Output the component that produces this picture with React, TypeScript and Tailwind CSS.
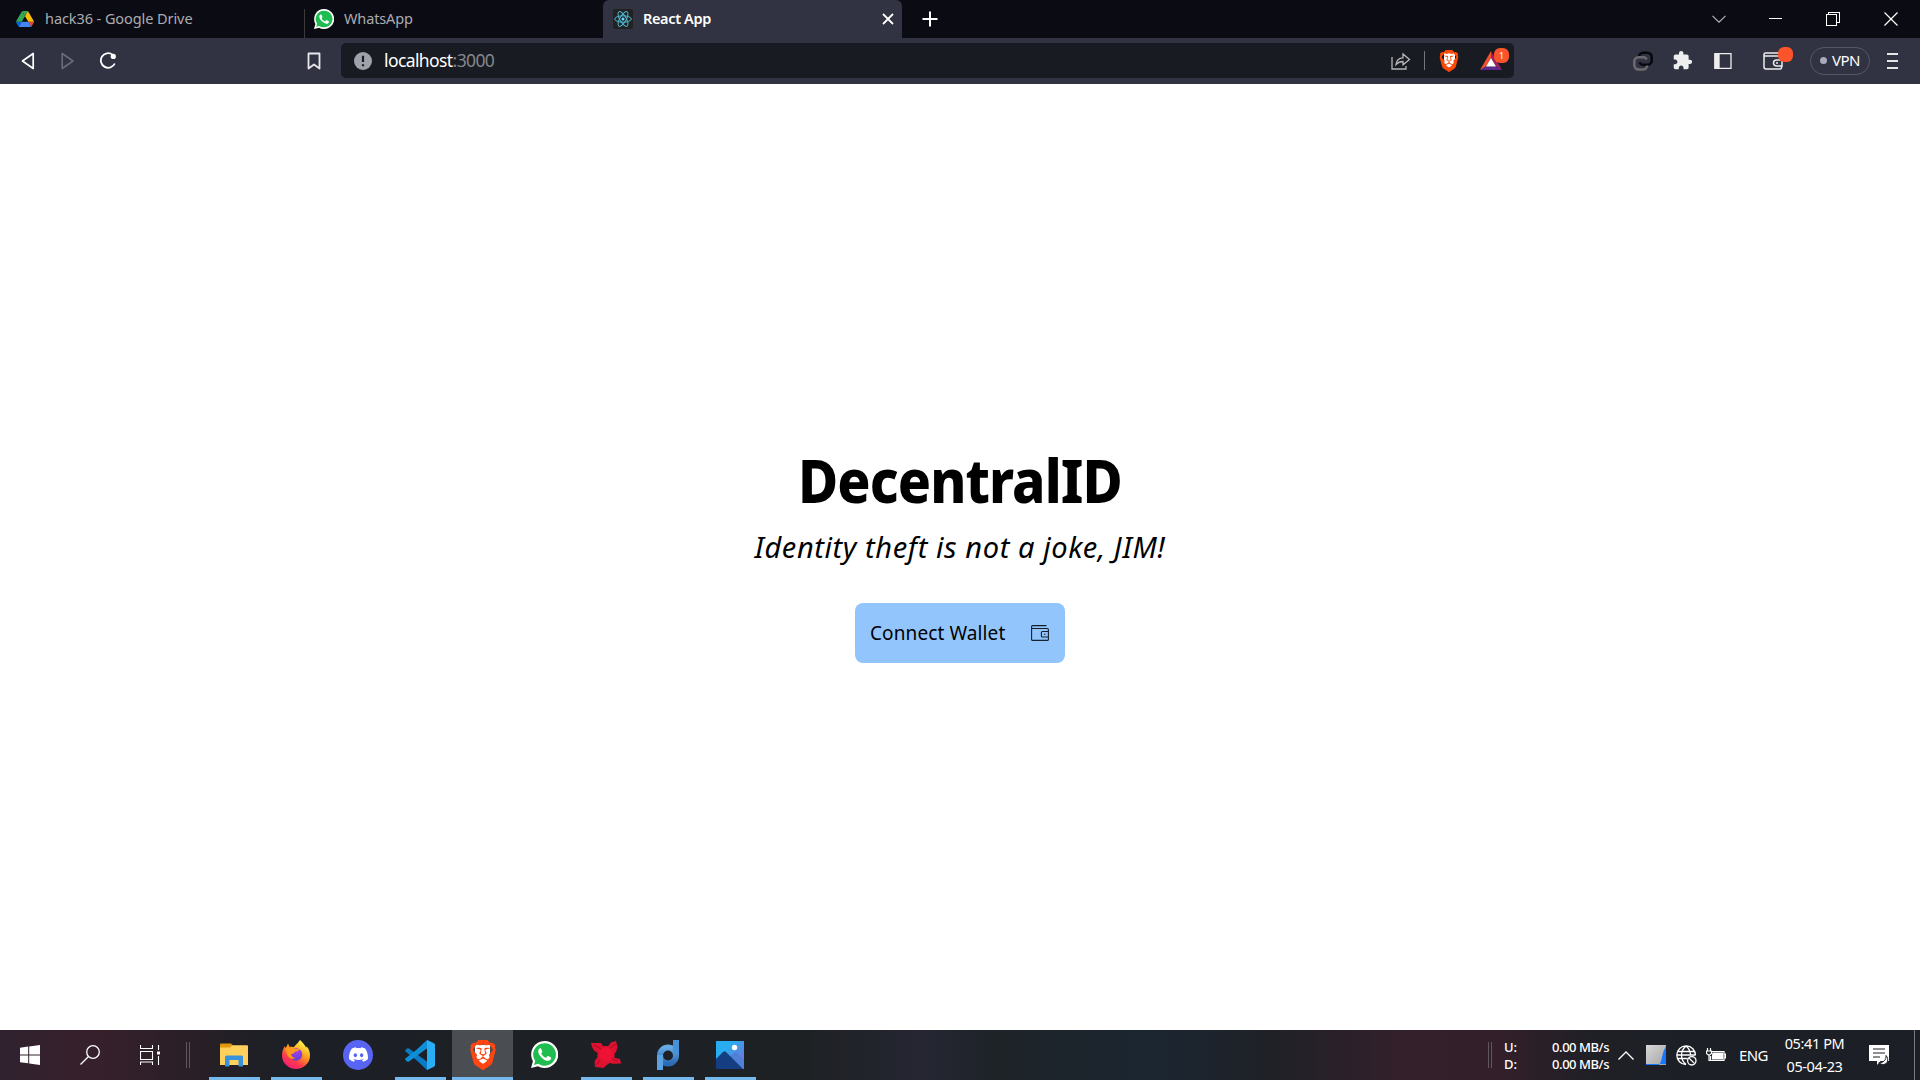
import React from "react";
import { SiBrave, SiDiscord } from "react-icons/si";
import { MdExtension } from "react-icons/md";

function DriveIcon() {
  return (
    <svg viewBox="0 0 87.3 78" className="h-4 w-[18px]">
      <path d="m6.6 66.85 3.85 6.65c.8 1.4 1.95 2.5 3.3 3.3l13.75-23.8h-27.5c0 1.55.4 3.1 1.2 4.5z" fill="#0066da" />
      <path d="m43.65 25-13.75-23.8c-1.35.8-2.5 1.9-3.3 3.3l-25.4 44a9.06 9.06 0 0 0 -1.2 4.5h27.5z" fill="#34a853" />
      <path d="m73.55 76.8c1.35-.8 2.5-1.9 3.3-3.3l1.6-2.75 7.65-13.25c.8-1.4 1.2-2.95 1.2-4.5h-27.5l5.85 11.5z" fill="#ea4335" />
      <path d="m43.65 25 13.75-23.8c-1.35-.8-2.9-1.2-4.5-1.2h-18.5c-1.6 0-3.15.45-4.5 1.2z" fill="#34a853" />
      <path d="m59.8 53h-32.3l-13.75 23.8c1.35.8 2.9 1.2 4.5 1.2h50.8c1.6 0 3.15-.45 4.5-1.2z" fill="#4285f4" />
      <path d="m73.4 26.5-12.7-22c-.8-1.4-1.95-2.5-3.3-3.3l-13.75 23.8 16.15 28h27.45c0-1.55-.4-3.1-1.2-4.5z" fill="#fbbc04" />
    </svg>
  );
}

function WhatsAppIcon({ className }: { className: string }) {
  return (
    <svg viewBox="0 0 28 28" className={className}>
      <path d="M14 0A14 14 0 0 0 2 21L0 28l7.2-1.9A14 14 0 1 0 14 0Z" fill="#fff" />
      <path d="M14 2.3A11.7 11.7 0 0 0 4.4 20.700L3 25l4.600-1.300A11.700 11.700 0 1 0 14 2.300Z" fill="#1fbd4f" />
      <path d="M9.700 7.600c-.8 0-2.200 1.100-2.200 3.200 0 2.300 1.700 4.500 3.700 6.500 2.300 2.200 4.700 3.300 6.400 3.300 1.900 0 3.300-1.200 3.300-2.900 0-.5-.2-.7-.6-.9l-2.500-1.200c-.4-.2-.7-.1-.9.2l-1 1.300c-.3.3-.6.3-1 .1-1.800-.8-3.200-2.100-4.100-3.700-.2-.4-.1-.6.1-.9l.7-.9c.2-.3.2-.5.1-.8l-1.100-2.700c-.2-.5-.5-.6-.9-.6Z" fill="#fff" />
    </svg>
  );
}

function ReactIcon() {
  return (
    <svg viewBox="0 0 20 20" className="size-5" fill="none" stroke="#4fb8d3" strokeWidth="1">
      <rect width="20" height="20" rx="2" fill="#222" stroke="none" />
      <ellipse cx="10" cy="10" rx="8.300" ry="3.200" />
      <ellipse cx="10" cy="10" rx="8.300" ry="3.200" transform="rotate(60 10 10)" />
      <ellipse cx="10" cy="10" rx="8.300" ry="3.200" transform="rotate(120 10 10)" />
      <circle cx="10" cy="10" r="1.500" fill="#61dafb" stroke="none" />
    </svg>
  );
}

function BraveIcon({ size }: { size: "sm" | "lg" }) {
  return (
    <span className={size === "sm" ? "relative block size-[22px]" : "relative block size-[30px]"}>
      <span className="absolute inset-x-[25%] inset-y-[18%] rounded-b-full bg-white" />
      <SiBrave className={size === "sm" ? "relative size-full text-[#fb4a06]" : "relative size-full text-[#ff4612]"} />
    </span>
  );
}

function TabBar() {
  return (
    <div className="flex h-[38px] bg-[#0b0b14] text-[14.500px] text-[#abacb0]">
      <div className="flex w-[304px] items-center pl-4">
        <DriveIcon />
        <span className="ml-[11px] whitespace-nowrap tracking-[-0.080px]">hack36 - Google Drive</span>
      </div>
      <div className="mt-[9px] w-px bg-[#3b3b3b]" />
      <div className="flex w-[298px] items-center pl-[9px]">
        <WhatsAppIcon className="size-5" />
        <span className="ml-[10px] tracking-[-0.150px]">WhatsApp</span>
      </div>
      <div className="flex w-[299px] items-center rounded-t-[6px] bg-[#313342] pl-[10px] text-white">
        <ReactIcon />
        <span className="ml-[10px] font-semibold tracking-[-0.350px]">React App</span>
        <svg viewBox="0 0 12 12" className="mr-[8px] ml-auto size-3" stroke="#fff" strokeWidth="1.800">
          <path d="M1 1l10 10M11 1L1 11" />
        </svg>
      </div>
      <div className="flex items-center pl-5">
        <svg viewBox="0 0 16 16" className="size-4" stroke="#fff" strokeWidth="2">
          <path d="M8 .5v15M.5 8h15" />
        </svg>
      </div>
      <div className="mr-[22px] ml-auto flex items-center pb-px">
        <svg viewBox="0 0 14 8" className="h-2 w-[14px]" fill="none" stroke="#b8b8bc" strokeWidth="1.100">
          <path d="M.5 .8L7 7.200L13.500 .8" />
        </svg>
        <span className="ml-[43px] h-px w-[13px] bg-white" />
        <svg viewBox="0 0 14 14" className="ml-11 size-[14px]" fill="none" stroke="#fff" shapeRendering="crispEdges">
          <path d="M.5 2.500h10v11H.5zM2.500 2.500v-2h11v10h-3" />
        </svg>
        <svg viewBox="0 0 14 14" className="ml-11 size-[14px]" stroke="#fff" strokeWidth="1.200">
          <path d="M.5 .5l13 13M13.500 .5l-13 13" />
        </svg>
      </div>
    </div>
  );
}

function AddressBar() {
  return (
    <div className="ml-[20px] flex h-[35px] w-[1173px] items-center rounded-[5px] bg-[#181b22]">
      <svg viewBox="0 0 18 18" className="ml-[13px] size-[18px]">
        <circle cx="9" cy="9" r="9" fill="#a0a2ab" />
        <path d="M9 3.800v6.200M9 12.200v2" stroke="#181b22" strokeWidth="2.200" />
      </svg>
      <span className="ml-3 text-[17.500px] tracking-[-0.600px] text-white">
        localhost<span className="text-[#85878c]">:3000</span>
      </span>
      <svg viewBox="0 0 20 18" className="ml-auto h-[18px] w-5" fill="none" stroke="#b4b5b8" strokeWidth="1.300">
        <path d="M1 5v12h14v-3" />
        <path d="M5 12.500c.4-4.300 3-6.500 7-6.700V2l6.500 5.500L12 12.800V9.500c-3 0-5 .8-7 3Z" />
      </svg>
      <span className="ml-[13px] h-[19px] w-px bg-[#74767b]" />
      <span className="ml-[13px]"><BraveIcon size="sm" /></span>
      <span className="relative mr-[12px] ml-[20px]">
        <svg viewBox="0 0 22 19" className="h-[19px] w-[22px]">
          <path d="M11 0L0 19l6-3.500L11 7Z" fill="#f2502f" />
          <path d="M11 0l11 19-6-3.500L11 7Z" fill="#9e1f63" />
          <path d="M0 19h22l-6-3.500H6Z" fill="#5b2a8c" />
          <path d="M11 7l5 8.500H6Z" fill="#fff" />
        </svg>
        <span className="absolute -top-[3px] left-[14px] flex size-[15px] items-center justify-center rounded-[6px] bg-[#fb542b] text-[9px] text-white">1</span>
      </span>
    </div>
  );
}

function Toolbar() {
  return (
    <div className="flex h-[46px] items-center bg-[#313342] pb-px">
      <svg viewBox="0 0 14 18" className="ml-[21px] h-[18px] w-[14px]" fill="none" stroke="#fff" strokeWidth="1.700" strokeLinejoin="round">
        <path d="M12.200 1.500v15L1.500 9Z" />
      </svg>
      <svg viewBox="0 0 14 18" className="ml-[26px] h-[18px] w-[14px]" fill="none" stroke="#696b79" strokeWidth="1.600" strokeLinejoin="round">
        <path d="M1.200 1.500v15L12 9Z" />
      </svg>
      <svg viewBox="0 0 18 18" className="ml-[24px] size-[18px]" fill="none" stroke="#fff" strokeWidth="1.800">
        <path d="M13.500 2.600A7.300 7.300 0 1 0 15.800 11.500" />
        <circle cx="14.300" cy="4.400" r="2.600" fill="#fff" stroke="none" />
      </svg>
      <svg viewBox="0 0 14 18" className="ml-[190px] h-[18px] w-[14px]" fill="none" stroke="#e8e8ea" strokeWidth="1.800" strokeLinejoin="round">
        <path d="M1.500 1.500h11v15L7 12.500l-5.500 4Z" />
      </svg>
      <AddressBar />
      <svg viewBox="0 0 20 20" className="ml-[119px] size-5" fill="none" strokeWidth="2.500">
        <path d="M6 6.500V6a4.300 4.300 0 0 1 4.300-4.300h4A4.300 4.300 0 0 1 18.700 6v3.500a4.300 4.300 0 0 1-4.400 4.300H10A4 4 0 0 1 6.500 11.500" stroke="#07080c" />
        <path d="M13.500 8.500A3.500 3.500 0 0 0 10 6.300H5.500A4.300 4.300 0 0 0 1.300 10.300v4a4.300 4.300 0 0 0 4.200 4.200H10a4.300 4.300 0 0 0 4.200-4" stroke="#6b6b70" />
      </svg>
      <MdExtension className="ml-[19px] size-[21px] text-[#eee]" />
      <svg viewBox="0 0 18 16" className="ml-[21px] h-4 w-[18px]" fill="none" stroke="#eee" strokeWidth="1.300">
        <path d="M1 .7h16v14.600H1z" />
        <path d="M1 1h4v14H1z" fill="#eee" />
      </svg>
      <span className="relative ml-[31px]">
        <svg viewBox="0 0 20 18" className="h-[18px] w-5" fill="none" stroke="#eee" strokeWidth="1.500">
          <path d="M18.500 7V5.500a1.500 1.500 0 0 0-1.500-1.500H1V2.500A1.500 1.500 0 0 1 2.500 1H17M1 3v12a2 2 0 0 0 2 2h14a1.500 1.500 0 0 0 1.500-1.500V14" />
          <path d="M19 8v6h-5.500a3 3 0 0 1 0-6Z" />
          <path d="M13 11h2" />
        </svg>
        <span className="absolute -top-[5px] left-[15px] size-[15px] rounded-[6px] bg-[#fb542b]" />
      </span>
      <div className="ml-[27px] flex h-7 w-[60px] items-center justify-center gap-[5px] rounded-full border border-[#54566a] text-[15px] tracking-[-0.500px] text-white">
        <span className="size-[7px] rounded-full bg-[#a9abbd]" />
        VPN
      </div>
      <div className="ml-[17px] flex flex-col gap-[5px]">
        <span className="h-[2px] w-[11px] bg-[#e6e6e8]" />
        <span className="h-[2px] w-[11px] bg-[#e6e6e8]" />
        <span className="h-[2px] w-[11px] bg-[#e6e6e8]" />
      </div>
    </div>
  );
}

function Landing() {
  return (
    <main className="flex h-[946px] flex-col items-center bg-white text-black">
      <h1 className="mt-[361px] scale-x-[0.915] text-[60px] leading-[70px] font-extrabold tracking-[-1px]">DecentralID</h1>
      <p className="mt-[14px] text-[29px] leading-9 tracking-[0.600px] italic">Identity theft is not a joke, JIM!</p>
      <button className="mt-[38px] flex h-[60px] w-[210px] items-center rounded-lg bg-[#93c5fd] pl-[15px] text-[19px]">
        <span className="tracking-[0.100px] whitespace-nowrap">Connect Wallet</span>
        <svg viewBox="0 0 18 16" className="mr-4 ml-auto h-4 w-[18px]" fill="none" stroke="#16202c" strokeWidth="1.100">
          <path d="M17.400 6V4.500a1 1 0 0 0-1-1H.6V1.600a1 1 0 0 1 1-1H15.500M.6 3v11.400a1 1 0 0 0 1 1h14.800a1 1 0 0 0 1-1V11.500" />
          <path d="M17.400 6.500v5.500h-6a1 1 0 0 1-1-1V7.500a1 1 0 0 1 1-1Z" />
          <path d="M13 9.300h1.500" />
        </svg>
      </button>
    </main>
  );
}

function FolderIcon() {
  return (
    <svg viewBox="0 0 28 24" className="h-6 w-7">
      <path d="M0 1.500Q0 .5 1 .5h10l2 2v4H0Z" fill="#e09a0a" />
      <path d="M0 4.500h10l2.500-2.200H27q1 0 1 1V22H0Z" fill="#ffd15c" />
      <path d="M5 23.500V14q0-1.500 1.500-1.500h15q1.500 0 1.500 1.500v9.500h-4.500V17h-9v6.500Z" fill="#3992dc" />
    </svg>
  );
}

function FirefoxIcon() {
  return (
    <svg viewBox="0 0 28 29" className="h-[29px] w-7">
      <defs>
        <linearGradient id="fx" x1="0.800" y1="0" x2="0.200" y2="1">
          <stop offset="0.100" stopColor="#fff044" />
          <stop offset="0.420" stopColor="#ff9a1e" />
          <stop offset="0.700" stopColor="#ff3b4c" />
          <stop offset="1" stopColor="#ec1582" />
        </linearGradient>
        <radialGradient id="fxglobe" cx="0.600" cy="0.300" r="0.800">
          <stop offset="0" stopColor="#a03ff0" />
          <stop offset="1" stopColor="#5a3fc4" />
        </radialGradient>
      </defs>
      <path d="M18 0c3 3 5 5 6 7.500.5-.2.700-.6.800-1C27 9 28 12 28 15.500A14 13.500 0 0 1 0 15.500C0 11 1.500 8 3 6l.5 3L6 3.500 7.500 7c2-.5 3.500-.3 4.500.3C13 5 15.500 4 18 0Z" fill="url(#fx)" />
      <circle cx="14" cy="14.500" r="6.200" fill="url(#fxglobe)" />
      <path d="M3 8c2-1.500 7-1.500 9.500.7l5 .6c-.3 1.700-2.500 2.200-4.500 2.400-.8 1.800-2 2.300-4 2.300.5 2.700 2.500 4 5 4-3.500 1.700-8 .5-9-4C4.500 12 3.500 10 3 8Z" fill="#ff981f" />
    </svg>
  );
}

function VsCodeIcon() {
  return (
    <svg viewBox="0 0 30 30" className="size-[30px]">
      <path d="M0 10.500l2-2q1-.6 2 0L28 26l-6 4Q12 20 1 12Q0 11.200 0 10.500Z" fill="#0a7bc4" />
      <path d="M0 19.500l2 2q1 .6 2 0L28 4l-6-4Q12 10 1 18Q0 18.800 0 19.500Z" fill="#0f8fd8" />
      <path d="M22 0l7 3.200q1 .5 1 1.800v20q0 1.300-1 1.800L22 30Z" fill="#29aef5" />
    </svg>
  );
}

function RedStarIcon() {
  return (
    <svg viewBox="0 0 30 27" className="h-[27px] w-[30px]">
      <path d="M0 2h10l2.500 3.500c1.500-.6 3-.6 4.500-.2L20 1.500 25 0l1.500 6-1 4-2 3c.3 1.300.2 2.600-.1 3.800L29 18l1 4.500-9 .3-2-1-3.500 2.400L12.500 27 4 26l-.5-5.500 3-4.500c-.3-1.600-.2-2.600.2-4L3 9.500 1 6Z" fill="#dc1230" />
      <circle cx="15" cy="13.500" r="7" fill="#ee1235" />
      <path d="M3 4l7 4M25 3l-6 4M5 24l4-5M27 20l-6-2" stroke="#a90c22" strokeWidth="1" />
    </svg>
  );
}

function PdIcon() {
  return (
    <svg viewBox="0 0 22 30" className="h-[30px] w-[22px]" fill="none" strokeWidth="6">
      <defs>
        <linearGradient id="pd" x1="0" y1="0" x2="0" y2="1">
          <stop offset="0" stopColor="#65a9e6" />
          <stop offset="1" stopColor="#2b6cb5" />
        </linearGradient>
      </defs>
      <circle cx="11" cy="15.500" r="8" stroke="url(#pd)" />
      <path d="M3 30V15" stroke="#5aa2e3" />
      <path d="M19 0v15" stroke="#4a90d6" />
    </svg>
  );
}

function PhotosIcon() {
  return (
    <svg viewBox="0 0 28 28" className="size-7">
      <defs>
        <linearGradient id="sky" x1="0" y1="0" x2="1" y2="1">
          <stop offset="0.300" stopColor="#28aef0" />
          <stop offset="1" stopColor="#8a62d0" />
        </linearGradient>
      </defs>
      <path d="M0 0h28v28H0z" fill="url(#sky)" />
      <path d="M12 18l6-6q1.500-1.500 3 0l7 7v9H14Z" fill="#4f7fd6" />
      <path d="M0 18l7-7q1.500-1.500 3 0l17 17H0Z" fill="#143d82" />
      <circle cx="18.500" cy="6.500" r="2.700" fill="#fff" />
    </svg>
  );
}

type AppSlot = { name: string; icon: React.ReactNode; open?: boolean; active?: boolean };

const apps: AppSlot[] = [
  { name: "Files", icon: <FolderIcon />, open: true },
  { name: "Firefox", icon: <FirefoxIcon />, open: true },
  {
    name: "Discord",
    icon: (
      <span className="flex size-[30px] items-center justify-center rounded-full bg-[#5865f2]">
        <SiDiscord className="size-[19px] text-white" />
      </span>
    ),
  },
  { name: "Code", icon: <VsCodeIcon />, open: true },
  { name: "Brave", icon: <BraveIcon size="lg" />, active: true },
  { name: "WhatsApp", icon: <WhatsAppIcon className="size-[27px]" /> },
  { name: "Star", icon: <RedStarIcon />, open: true },
  { name: "Pd", icon: <PdIcon />, open: true },
  { name: "Photos", icon: <PhotosIcon />, open: true },
];

function Grip() {
  return <span className="h-[26px] w-1 border-x border-[#5f5660]" />;
}

function Taskbar() {
  return (
    <div className="flex h-[50px] items-center bg-[linear-gradient(90deg,#30222f_0%,#37202b_5%,#261f26_11%,#1c2026_15%,#1e2124_42%,#252632_48%,#1e2328_52%,#1b2631_60%,#1f2127_66%,#33202b_73%,#331f29_78%,#1f2026_83%,#1c2026_88%)] text-white">
      <svg viewBox="0 0 20 20" className="ml-5 size-5" fill="#fff">
        <path d="M0 2.800L8.200 1.600V9.400H0ZM9.200 1.400L20 0V9.400H9.200ZM0 10.400H8.200V18.300L0 17.200ZM9.200 10.400H20V20L9.200 18.500Z" />
      </svg>
      <svg viewBox="0 0 20 20" className="ml-10 size-5" fill="none" stroke="#fff" strokeWidth="1.300">
        <circle cx="13" cy="7" r="6.300" />
        <path d="M8.500 11.500L.5 19.500" />
      </svg>
      <svg viewBox="0 0 20 20" className="ml-10 size-5" fill="none" stroke="#fff" strokeWidth="1.100">
        <path d="M.5 0v3.500h12V0M.5 6.500h12v8H.5zM.5 20v-3h12v3M18.500 0v5M18.500 11v9" />
        <path d="M17 6.500h3v3h-3z" fill="#fff" stroke="none" />
      </svg>
      <span className="ml-[26px] flex"><Grip /></span>
      <div className="ml-[13px] flex h-full">
        {apps.map((app) => (
          <div
            key={app.name}
            className={
              app.active
                ? "ml-px flex h-full w-[61px] flex-col items-center bg-[#4a4d51]"
                : "flex h-full w-[62px] flex-col items-center"
            }
          >
            <span className="flex h-[47px] items-center justify-center pt-[2px]">{app.icon}</span>
            {app.active && <span className="h-[3px] w-full bg-[#76b9ed]" />}
            {app.open && <span className="h-[3px] w-[51px] bg-[#76b9ed]" />}
          </div>
        ))}
      </div>
      <span className="ml-auto flex"><Grip /></span>
      <div className="ml-[12px] flex w-[105px] flex-col pt-px text-[13px] leading-[17px] font-medium">
        <div className="flex justify-between"><span>U:</span><span className="tracking-[-0.450px]">0.00 MB/s</span></div>
        <div className="flex justify-between"><span>D:</span><span className="tracking-[-0.450px]">0.00 MB/s</span></div>
      </div>
      <svg viewBox="0 0 16 9" className="ml-[9px] h-[9px] w-4" fill="none" stroke="#fff" strokeWidth="1.300">
        <path d="M.5 8.500L8 1l7.500 7.500" />
      </svg>
      <svg viewBox="0 0 20 20" className="ml-3 size-5">
        <defs>
          <linearGradient id="tile" x1="0" y1="0" x2="1" y2="1">
            <stop offset="0" stopColor="#d8d8d8" />
            <stop offset="1" stopColor="#a4a4a6" />
          </linearGradient>
        </defs>
        <path d="M0 0h20v20H0z" fill="url(#tile)" />
        <path d="M20 1q-3 5-4 11t-3 8h7ZM0 19h20v1H0Z" fill="#1677ff" />
      </svg>
      <svg viewBox="0 0 21 21" className="ml-[10px] size-[21px]" fill="none" stroke="#fff" strokeWidth="1.300">
        <path d="M10 19.500A9.300 9.300 0 1 1 19.400 10.500M10 1c-6 5-6 13.500 0 18.500M10 1c3 2.500 4.400 5.500 4.500 9M2 6.500h16.500M2 13.500h9.500M1 10h18" />
        <circle cx="15.800" cy="15.800" r="4.200" />
        <path d="M13 13l5.600 5.600" />
      </svg>
      <svg viewBox="0 0 20 14" className="ml-[9px] h-[14px] w-5" fill="none" stroke="#fff" strokeWidth="1.200">
        <path d="M5.500 3.500h12.500v9H4.500V8M18.500 6h1v4h-1M1.500 0v3M4.500 0v3M.5 3h5v2.500L3 7.500.5 5.500ZM3 7v5.500h2" />
        <path d="M7 5h9.500v6H6.500V8Z" fill="#fff" />
      </svg>
      <span className="ml-[13px] w-7 text-[15px] tracking-[-0.600px]">ENG</span>
      <div className="ml-[17px] w-[61px] text-center text-[14.500px] leading-[23px] whitespace-nowrap tracking-[-0.400px]">
        <div>05:41 PM</div>
        <div>05-04-23</div>
      </div>
      <svg viewBox="0 0 20 20" className="ml-[24px] size-5">
        <path d="M0 0h20v16h-8.500l-3.500 4v-4H0Z" fill="#fff" />
        <path d="M4 4h12M4 8h12M4 12h7" stroke="#1c2026" strokeWidth="1.200" />
        <path d="M17 10.500c3 3.500 2 8.500-2.500 9-2 .1-3.500-.8-4.300-2 4 .5 7.300-2.500 6.800-7Z" fill="#fff" stroke="#1c2026" />
      </svg>
      <span className="ml-[25px] h-full w-px bg-[#77797c]" />
      <span className="w-[5px]" />
    </div>
  );
}

export default function App() {
  return (
    <div className="h-[1080px] w-[1920px] overflow-hidden font-['Noto_Sans',sans-serif]">
      <TabBar />
      <Toolbar />
      <Landing />
      <Taskbar />
    </div>
  );
}
